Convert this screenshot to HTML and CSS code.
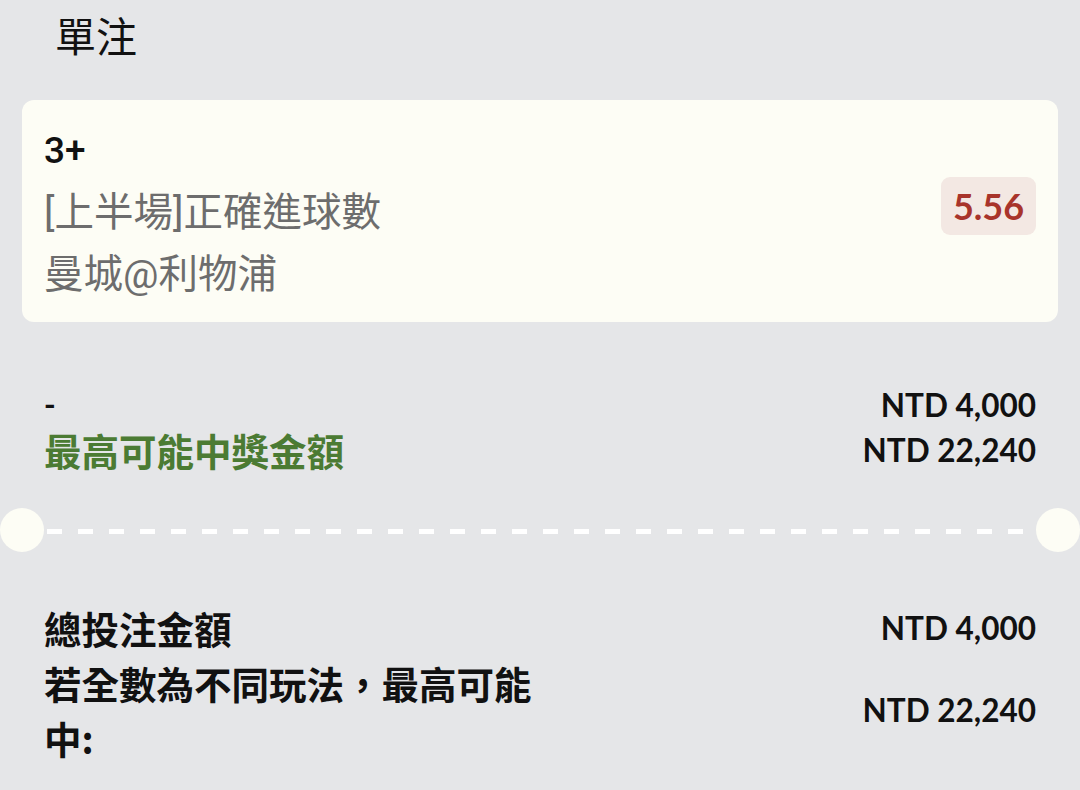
FILE: index.html
```html
<!DOCTYPE html>
<html lang="zh-Hant">
<head>
<meta charset="utf-8">
<link rel="stylesheet" href="styles.css">
</head>
<body>
<div class="page">
  <div class="title">單注</div>
  <div class="card">
    <div class="card-info">
      <div class="selection">3+</div>
      <div class="meta">[上半場]正確進球數</div>
      <div class="meta">曼城@利物浦</div>
    </div>
    <div class="odds">5.56</div>
  </div>
  <div class="summary">
    <div class="row">
      <div class="label dash">-</div>
      <div class="amount">NTD 4,000</div>
    </div>
    <div class="row">
      <div class="label green">最高可能中獎金額</div>
      <div class="amount">NTD 22,240</div>
    </div>
  </div>
  <div class="divider">
    <div class="notch"></div>
    <div class="dashes"></div>
    <div class="notch"></div>
  </div>
  <div class="totals">
    <div class="trow">
      <div class="tlabel">總投注金額</div>
      <div class="amount">NTD 4,000</div>
    </div>
    <div class="trow">
      <div class="tlabel">若全數為不同玩法，最高可能中:</div>
      <div class="amount">NTD 22,240</div>
    </div>
  </div>
</div>
</body>
</html>
```
FILE: styles.css
```css
html, body {
  margin: 0;
  padding: 0;
  background: #e5e6e8;
}
body {
  font-family: "Noto Sans CJK TC", "Noto Sans", sans-serif;
  color: #111;
}
.page {
  width: 1080px;
  height: 790px;
  overflow: hidden;
}
.title {
  height: 68px;
  line-height: 68px;
  padding-left: 55px;
  font-size: 41px;
  color: #111;
}
.card {
  margin: 32px 22px 0;
  height: 222px;
  box-sizing: border-box;
  padding: 20px 22px 16px;
  background: #fdfdf5;
  border-radius: 12px;
  display: flex;
  align-items: center;
  justify-content: space-between;
}
.card-info {
  display: flex;
  flex-direction: column;
}
.selection {
  font-family: Roboto, "Noto Sans CJK TC", sans-serif;
  font-weight: 500;
  font-size: 37px;
  line-height: 62px;
  color: #111;
}
.meta {
  font-family: Roboto, "Noto Sans CJK TC", sans-serif;
  font-size: 39.5px;
  line-height: 62px;
  color: #6d6d6d;
}
.odds {
  font-family: Lato, "Noto Sans", sans-serif;
  font-weight: 700;
  font-size: 36px;
  color: #a8342b;
  background: #f3e8e3;
  border-radius: 9px;
  width: 95px;
  height: 58px;
  display: flex;
  align-items: center;
  justify-content: center;
  margin-bottom: 14px;
}
.summary {
  margin-top: 60px;
  padding: 0 44px;
}
.row {
  display: flex;
  justify-content: space-between;
  align-items: center;
  height: 45px;
}
.label {
  font-size: 37.5px;
  font-weight: 700;
}
.dash {
  font-family: Roboto, sans-serif;
  font-size: 30px;
}
.green {
  color: #4b7b33;
}
.amount {
  font-family: Lato, "Noto Sans", sans-serif;
  font-weight: 700;
  font-size: 31.5px;
  color: #111;
}
.divider {
  margin-top: 36px;
  height: 44px;
  display: flex;
  align-items: center;
}
.notch {
  width: 44px;
  height: 44px;
  border-radius: 50%;
  background: #fdfdf5;
  flex: none;
}
.dashes {
  flex: 1;
  height: 5px;
  margin: 2px 3px 0 3px;
  background: repeating-linear-gradient(to right, #ffffff 0 15px, transparent 15px 31px);
}
.totals {
  margin-top: 48px;
  padding: 0 44px;
}
.trow {
  display: flex;
  justify-content: space-between;
  align-items: center;
}
.tlabel {
  font-size: 37.5px;
  font-weight: 700;
  line-height: 55px;
  max-width: 495px;
}
```
